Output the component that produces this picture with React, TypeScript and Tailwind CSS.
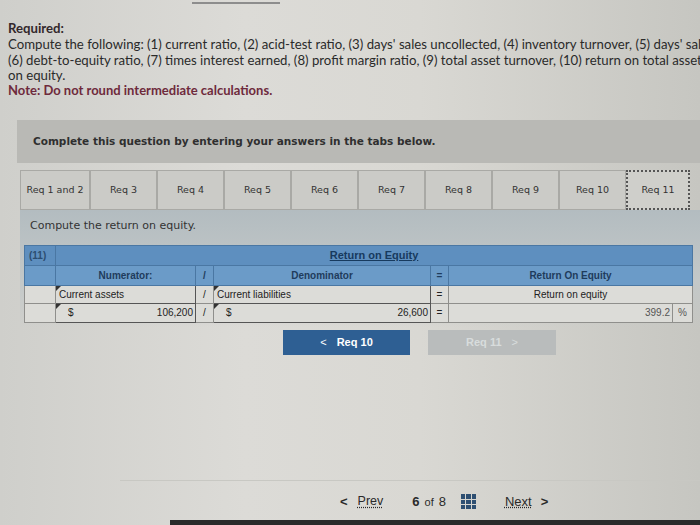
import React from 'react';

const TABS = ['Req 1 and 2', 'Req 3', 'Req 4', 'Req 5', 'Req 6', 'Req 7', 'Req 8', 'Req 9', 'Req 10', 'Req 11'];

// little dark marker in the top-left corner of an input cell
function Marker() {
  return (
    <span className="absolute left-0 top-0 w-0 h-0 border-t-[5px] border-t-[#333] border-r-[5px] border-r-transparent" />
  );
}

export default function App() {
  return (
    <div className="w-[700px] h-[525px] overflow-hidden relative bg-[linear-gradient(90deg,#cfcfcb_0%,#dcdbd7_35%,#d9d8d3_60%,#c6c6c1_100%)] font-['Lato',sans-serif] text-[#2a2a2a]">
      {/* top rule */}
      <div className="ml-[192px] mt-[2px] w-[88px] h-[2px] bg-[#8d8d8d]" />

      {/* Requirements text */}
      <div className="pl-[8px] pt-[16px] text-[13.2px] leading-[16px] whitespace-nowrap">
        <div className="font-bold text-[#33282b]">Required:</div>
        <div>Compute the following: (1) current ratio, (2) acid-test ratio, (3) days' sales uncollected, (4) inventory turnover, (5) days' sales in inventory,</div>
        <div>(6) debt-to-equity ratio, (7) times interest earned, (8) profit margin ratio, (9) total asset turnover, (10) return on total assets, and (11) return</div>
        <div className="leading-[14px]">on equity.</div>
        <div className="font-bold text-[#6e2a3c] text-[13px]">Note: Do not round intermediate calculations.</div>
      </div>

      {/* instruction bar */}
      <div className="ml-[17px] mt-[22px] h-[43px] flex items-center pl-[16px] bg-[#b9b9b5] font-['DejaVu_Sans',sans-serif] font-bold text-[10.5px] text-[#2f2f2f]">
        Complete this question by entering your answers in the tabs below.
      </div>

      {/* tabs */}
      <div className="ml-[20px] mt-[7px] flex font-['DejaVu_Sans',sans-serif] text-[9.5px] text-[#333]">
        {TABS.map((t, i) => (
          <div
            key={t}
            className={
              i === TABS.length - 1
                ? 'w-[64px] h-[40px] flex items-center justify-center border-2 border-dotted border-[#555] bg-[#cfcfcb]'
                : i === 0
                  ? 'w-[70px] h-[40px] flex items-center justify-center border border-[#a9a9a5] bg-[#cbcbc7]'
                  : 'w-[67px] h-[40px] flex items-center justify-center border border-[#a9a9a5] bg-[#cbcbc7]'
            }
          >
            {t}
          </div>
        ))}
      </div>

      {/* content panel */}
      <div className="ml-[20px] bg-[linear-gradient(180deg,#b3bcc0_0%,#c3c8c8_60%,transparent_100%)] pt-[8px] pb-[5px]">
        <div className="pl-[10px] text-[11px] font-['DejaVu_Sans',sans-serif] text-[#333]">Compute the return on equity.</div>
        <table className="mt-[10px] ml-[4px] border-collapse font-['Liberation_Sans',sans-serif] text-[10px] text-[#222]">
          <colgroup>
            <col className="w-[31px]" />
            <col className="w-[140px]" />
            <col className="w-[18px]" />
            <col className="w-[217px]" />
            <col className="w-[18px]" />
            <col className="w-[224px]" />
            <col className="w-[20px]" />
          </colgroup>
          <tbody>
            <tr className="h-[20px] bg-[#5e8fbf]">
              <td className="border border-[#4a77a3] pl-[4px] font-bold text-[#2c4d70]">(11)</td>
              <td colSpan={6} className="border border-[#4a77a3] text-center font-bold underline text-[#173a5e] text-[11px]">Return on Equity</td>
            </tr>
            <tr className="h-[20px] bg-[#6b9bc8] font-bold text-[#1f3c5c]">
              <td className="border border-[#4a77a3]" />
              <td className="border border-[#4a77a3] text-center">Numerator:</td>
              <td className="border border-[#4a77a3] text-center">/</td>
              <td className="border border-[#4a77a3] text-center">Denominator</td>
              <td className="border border-[#4a77a3] text-center">=</td>
              <td colSpan={2} className="border border-[#4a77a3] text-center">Return On Equity</td>
            </tr>
            <tr className="h-[18px] bg-[#dcdcd8]">
              <td className="border border-[#8f8f8c]" />
              <td className="relative border border-[#555] pl-[3px]"><Marker />Current assets</td>
              <td className="border border-[#8f8f8c] text-center">/</td>
              <td className="relative border border-[#555] pl-[3px]"><Marker />Current liabilities</td>
              <td className="border border-[#8f8f8c] text-center">=</td>
              <td colSpan={2} className="border border-[#8f8f8c] text-center">Return on equity</td>
            </tr>
            <tr className="h-[19px] bg-[#dcdcd8]">
              <td className="border border-[#8f8f8c]" />
              <td className="relative border border-[#555] pr-[2px]">
                <Marker />
                <div className="flex justify-between pl-[12px]"><span>$</span><span>106,200</span></div>
              </td>
              <td className="border border-[#8f8f8c] text-center">/</td>
              <td className="relative border border-[#555] pr-[2px]">
                <Marker />
                <div className="flex justify-between pl-[12px]"><span>$</span><span>26,600</span></div>
              </td>
              <td className="border border-[#8f8f8c] text-center">=</td>
              <td className="border border-[#8f8f8c] text-right pr-[2px] text-[#555]">399.2</td>
              <td className="border border-[#8f8f8c] text-center text-[#555]">%</td>
            </tr>
          </tbody>
        </table>
      </div>

      {/* prev / next requirement buttons */}
      <div className="ml-[283px] mt-[2px] flex gap-[18px] font-['Liberation_Sans',sans-serif] font-bold text-[11px]">
        <div className="w-[127px] h-[25px] flex items-center justify-center gap-[10px] bg-[#2e5f93] text-white">
          <span className="font-normal">&lt;</span>
          <span>Req 10</span>
        </div>
        <div className="w-[128px] h-[25px] flex items-center justify-center gap-[10px] bg-[#b9bcbc] text-[#d8dcdc]">
          <span>Req 11</span>
          <span className="font-normal">&gt;</span>
        </div>
      </div>

      {/* bottom pagination */}
      <div className="absolute left-[120px] right-0 top-[480px] h-px bg-[#c8c8c3]" />
      <div className="absolute left-[340px] top-[492px] flex items-center font-['Liberation_Sans',sans-serif] text-[12.5px] text-[#2a2a2a]">
        <div className="flex items-center gap-[10px] pr-[29px]">
          <span className="font-bold text-[13px]">&lt;</span>
          <span className="underline decoration-dotted">Prev</span>
        </div>
        <div className="flex items-center gap-[5px] pr-[15px] text-[13px]">
          <span className="font-bold">6</span>
          <span className="text-[11px]">of</span>
          <span>8</span>
        </div>
        <div className="grid grid-cols-3 gap-[1px] w-[15px] h-[15px] mr-[29px]">
          {Array.from({ length: 9 }).map((_, i) => (
            <span key={i} className="bg-[#2e4f72]" />
          ))}
        </div>
        <div className="flex items-center gap-[9px]">
          <span className="underline decoration-dotted text-[13px]">Next</span>
          <span className="font-bold text-[13px]">&gt;</span>
        </div>
      </div>
      <div className="absolute left-[170px] right-0 bottom-0 h-[5px] bg-[#2a2a2a]" />
    </div>
  );
}
